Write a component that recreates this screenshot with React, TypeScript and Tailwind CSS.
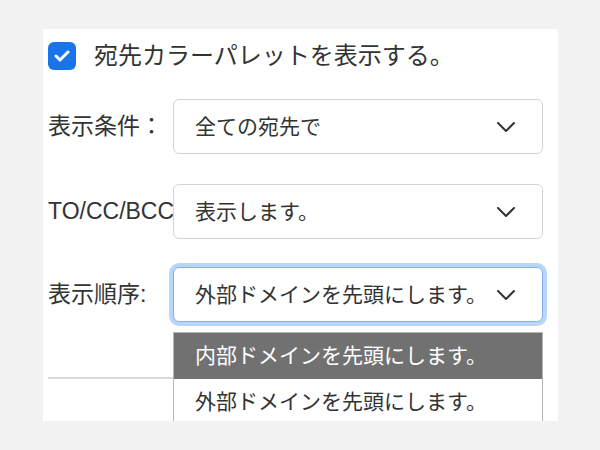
import React from 'react';

const font = { fontFamily: '"Liberation Sans", "Noto Sans CJK JP", "Noto Sans", sans-serif' };

function Chevron() {
  return (
    <svg width="20" height="12" viewBox="0 0 20 12" fill="none" className="shrink-0">
      <polyline points="2,2 10,10 18,2" stroke="#333" strokeWidth="2" strokeLinecap="round" strokeLinejoin="round" />
    </svg>
  );
}

function Select({ value, focused }: { value: string; focused?: boolean }) {
  return (
    <div
      className={
        'w-[370px] h-[55px] rounded-[6px] bg-white flex items-center justify-between pl-[21px] pr-[26px] ' +
        (focused ? 'border border-[#7fb0ee] ring-4 ring-[#b9d5f7]' : 'border border-[#d4d4d4]')
      }
    >
      <span className="text-[21px] leading-none text-[#333] whitespace-nowrap">{value}</span>
      <Chevron />
    </div>
  );
}

function Row({ label, value, focused }: { label: string; value: string; focused?: boolean }) {
  return (
    <div className="flex items-center">
      <div className="w-[125px] text-[23px] leading-none text-[#333] whitespace-nowrap">{label}</div>
      <Select value={value} focused={focused} />
    </div>
  );
}

export default function App() {
  return (
    <div className="w-[600px] h-[450px] bg-[#f2f2f2] pt-[29px] pl-[43px] overflow-hidden" style={font}>
      <div className="relative w-[515px] h-[392px] bg-white overflow-hidden pl-[5px] pt-[13px]">
        <label className="flex items-center gap-[18px] h-[28px]">
          <span className="w-[28px] h-[28px] rounded-[6px] bg-[#1a73e8] flex items-center justify-center">
            <svg width="16" height="12" viewBox="0 0 16 12" fill="none">
              <polyline points="2,6 6,10 14,2" stroke="#fff" strokeWidth="3" strokeLinecap="round" strokeLinejoin="round" />
            </svg>
          </span>
          <span className="text-[24px] leading-none text-[#333] whitespace-nowrap">宛先カラーパレットを表示する。</span>
        </label>

        <div className="mt-[29px] flex flex-col gap-[30px]">
          <Row label="表示条件：" value="全ての宛先で" />
          <Row label="TO/CC/BCC" value="表示します。" />
          <div className="relative">
            <div className="mt-[-2px]">
              <Row label="表示順序:" value="外部ドメインを先頭にします。" focused />
            </div>
            <div className="absolute left-[125px] top-[63px] w-[370px] border border-[#b5b5b5] bg-white z-10">
              <div className="h-[46px] bg-[#717171] text-white text-[21px] flex items-center pl-[21px]">内部ドメインを先頭にします。</div>
              <div className="h-[46px] bg-white text-[#333] text-[21px] flex items-center pl-[21px]">外部ドメインを先頭にします。</div>
            </div>
          </div>
        </div>

        <div className="mt-[55px] mr-[15px] border-t-2 border-[#d9d9d9]" />
      </div>
    </div>
  );
}
